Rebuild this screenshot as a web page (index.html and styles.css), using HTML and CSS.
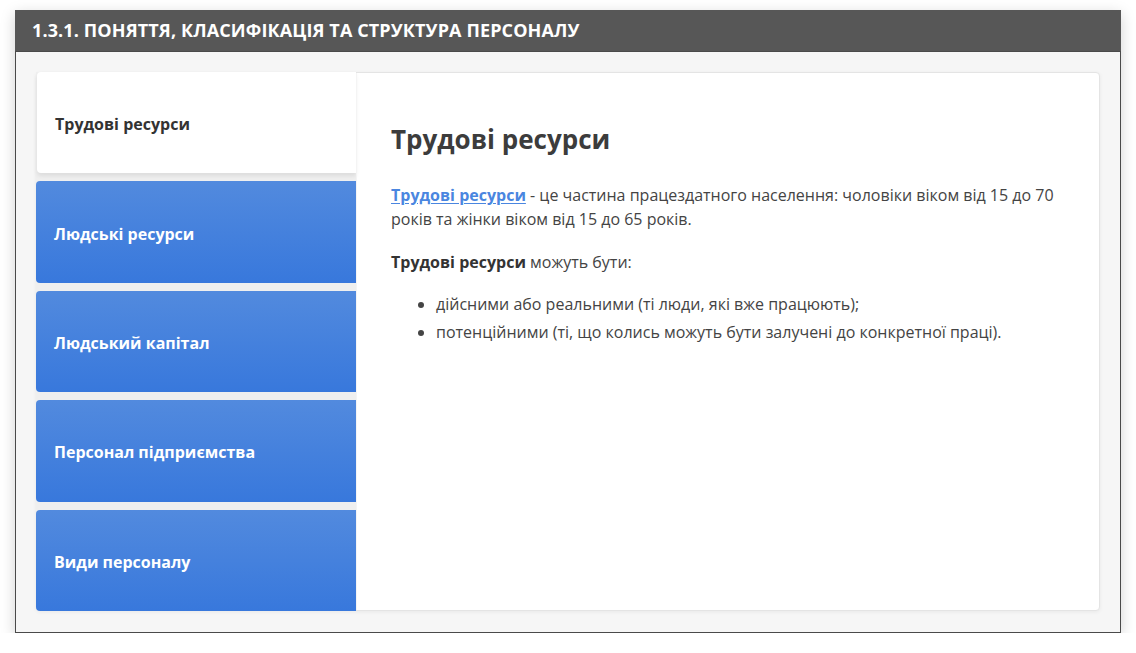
FILE: index.html
```html
<!DOCTYPE html>
<html lang="uk">
<head>
<meta charset="utf-8">
<title>1.3.1</title>
<link rel="stylesheet" href="styles.css">
</head>
<body>
<div class="frame">
  <div class="frame-head">1.3.1. ПОНЯТТЯ, КЛАСИФІКАЦІЯ ТА СТРУКТУРА ПЕРСОНАЛУ</div>
  <div class="frame-body">
    <div class="card">
      <div class="tabs">
        <div class="tab active">Трудові ресурси</div>
        <div class="tab">Людські ресурси</div>
        <div class="tab">Людський капітал</div>
        <div class="tab">Персонал підприємства</div>
        <div class="tab">Види персоналу</div>
      </div>
      <div class="content">
        <h2 class="title">Трудові ресурси</h2>
        <p class="para"><a class="term" href="#">Трудові ресурси</a> - це частина працездатного населення: чоловіки віком від 15 до 70 років та жінки віком від 15 до 65 років.</p>
        <p class="para"><b>Трудові ресурси</b> можуть бути:</p>
        <ul class="list">
          <li>дійсними або реальними (ті люди, які вже працюють);</li>
          <li>потенційними (ті, що колись можуть бути залучені до конкретної праці).</li>
        </ul>
      </div>
    </div>
  </div>
</div>
</body>
</html>
```
FILE: styles.css
```css
html, body {
  margin: 0;
  padding: 0;
  background: #ffffff;
}
body {
  font-family: "Open Sans", "Noto Sans", sans-serif;
  padding: 10px 15px 0 15px;
}
.frame {
  width: 1104px;
  border: 1px solid #4a4a4a;
  border-top: none;
  box-shadow: 0 4px 14px rgba(0, 0, 0, 0.18);
  background: #f6f6f6;
}
.frame-head {
  height: 41px;
  background: #575757;
  color: #ffffff;
  font-weight: 700;
  font-size: 18px;
  letter-spacing: 0.12px;
  line-height: 41px;
  padding-left: 17px;
  border-bottom: 1px solid #4a4a4a;
  margin: 0 -1px;
}
.frame-body {
  padding: 20px 20px 21px 20px;
}
.card {
  display: flex;
  height: 539px;
  background: #ffffff;
  border: 1px solid #e4e4e4;
  border-radius: 4px;
  box-shadow: 0 1px 4px rgba(0, 0, 0, 0.06);
  box-sizing: border-box;
}
.tabs {
  width: 320px;
  display: flex;
  flex-direction: column;
  gap: 8px;
  margin-top: -1px;
  margin-left: -1px;
  margin-bottom: -1px;
  background: #efefef;
}
.tab {
  flex: 1;
  display: flex;
  align-items: center;
  padding-left: 18px;
  padding-top: 3px;
  font-weight: 700;
  font-size: 16px;
  color: #ffffff;
  background: linear-gradient(to bottom, #528ade, #3878dc);
  border-radius: 4px 0 0 4px;
}
.tab.active {
  background: #ffffff;
  color: #333333;
  margin-left: 1px;
  box-shadow: 0 3px 4px rgba(0, 0, 0, 0.08);
}
.content {
  flex: 1;
  padding: 48px 34px 20px 34px;
  color: #444444;
  font-size: 16px;
  line-height: 24px;
  border-left: 1px solid #f4f4f4;
}
.title {
  margin: 0 0 26px 0;
  font-size: 26px;
  line-height: 36px;
  font-weight: 700;
  color: #3c3c3c;
}
.para {
  margin: 0 0 19px 0;
}
.para b {
  color: #333333;
}
.term {
  color: #4a86e0;
  font-weight: 700;
  text-decoration: underline;
  text-underline-offset: 2px;
}
.list {
  margin: -3px 0 0 0;
  padding-left: 45px;
}
.list li {
  line-height: 28px;
}
```
